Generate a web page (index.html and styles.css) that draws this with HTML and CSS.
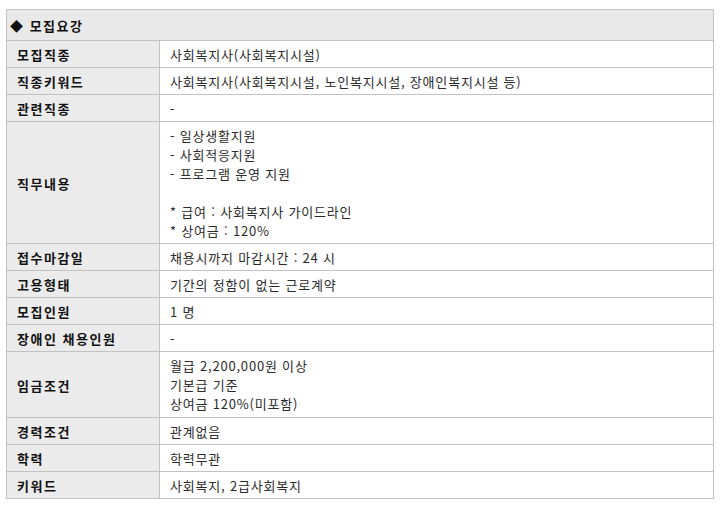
FILE: index.html
```html
<!DOCTYPE html>
<html lang="ko">
<head>
<meta charset="utf-8">
<title>모집요강</title>
<link rel="stylesheet" href="styles.css">
</head>
<body>
<table class="recruit">
  <colgroup><col class="col-label"><col class="col-value"></colgroup>
  <thead>
    <tr><th class="head" colspan="2">◆ 모집요강</th></tr>
  </thead>
  <tbody>
    <tr><th>모집직종</th><td>사회복지사(사회복지시설)</td></tr>
    <tr><th>직종키워드</th><td>사회복지사(사회복지시설, 노인복지시설, 장애인복지시설 등)</td></tr>
    <tr><th>관련직종</th><td>-</td></tr>
    <tr><th>직무내용</th><td>- 일상생활지원<br>- 사회적응지원<br>- 프로그램 운영 지원<br><br>* 급여 : 사회복지사 가이드라인<br>* 상여금 : 120%</td></tr>
    <tr><th>접수마감일</th><td>채용시까지 마감시간 : 24 시</td></tr>
    <tr><th>고용형태</th><td>기간의 정함이 없는 근로계약</td></tr>
    <tr><th>모집인원</th><td>1 명</td></tr>
    <tr><th>장애인 채용인원</th><td>-</td></tr>
    <tr><th>임금조건</th><td class="pay">월급 2,200,000원 이상<br>기본급 기준<br>상여금 120%(미포함)</td></tr>
    <tr><th>경력조건</th><td>관계없음</td></tr>
    <tr><th>학력</th><td>학력무관</td></tr>
    <tr><th>키워드</th><td>사회복지, 2급사회복지</td></tr>
  </tbody>
</table>
</body>
</html>
```
FILE: styles.css
```css
html, body {
  background: #ffffff;
}
body {
  margin: 9px 0 0 6px;
  font-family: "Noto Sans CJK KR", "Noto Sans", sans-serif;
  font-size: 13px;
  color: #2b2b2b;
}
.recruit {
  width: 708px;
  border-collapse: collapse;
  table-layout: fixed;
  border: 1px solid #c2c2c2;
}
.col-label {
  width: 153px;
}
.recruit th,
.recruit td {
  border: 1px solid #c2c2c2;
  line-height: 19px;
  padding: 4px 10px 3px 10px;
  text-align: left;
  vertical-align: middle;
}
.recruit th {
  background: #ebebeb;
  color: #111111;
  font-weight: bold;
  letter-spacing: 1.5px;
}
.recruit td {
  background: #ffffff;
  font-weight: normal;
  letter-spacing: 0.8px;
}
.recruit th.head {
  background: #e9e9e9;
  height: 30px;
  padding: 0 0 0 3px;
  letter-spacing: 1.5px;
}
.recruit td.pay {
  padding-bottom: 4px;
}
```
